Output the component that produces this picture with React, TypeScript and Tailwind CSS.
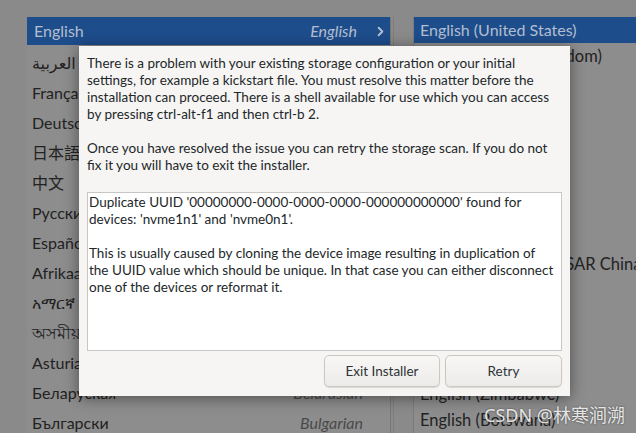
import { ChevronRight } from "lucide-react";

const languages = [
  { native: "العربية", english: "Arabic" },
  { native: "Français", english: "French" },
  { native: "Deutsch", english: "German" },
  { native: "日本語", english: "Japanese" },
  { native: "中文", english: "Mandarin Chinese" },
  { native: "Русский", english: "Russian" },
  { native: "Español", english: "Spanish" },
  { native: "Afrikaans", english: "Afrikaans" },
  { native: "አማርኛ", english: "Amharic" },
  { native: "অসমীয়া", english: "Assamese" },
  { native: "Asturianu", english: "Asturian" },
  { native: "Беларуская", english: "Belarusian" },
  { native: "Български", english: "Bulgarian" },
];

const locales = [
  "English (United Kingdom)",
  "English (India)",
  "English (Australia)",
  "English (Canada)",
  "English (Denmark)",
  "English (Ireland)",
  "English (Philippines)",
  "English (Nigeria)",
  "English (Hong Kong SAR China)",
  "English (Singapore)",
  "English (Israel)",
  "English (Malta)",
  "English (Zambia)",
  "English (Zimbabwe)",
  "English (Botswana)",
];

const App = () => {
  return (
    <div
      className="relative w-[636px] h-[433px] overflow-hidden bg-[#8a8a8a]"
      style={{ fontFamily: 'Lato, "Noto Sans", "DejaVu Sans", "Noto Sans CJK SC", sans-serif' }}
    >
      {/* Language lists (dimmed behind the dialog) */}
      <div className="flex h-full pt-[17px] pl-[27px]">
        <div className="w-[364px] shrink-0 bg-[#8d8d8d] border-r border-[#777]">
          <div className="flex items-center h-[28px] bg-[#1e4d8c] pl-[7px] pr-[2px] text-[16px] text-[#b3bfcf]">
            <span>English</span>
            <span className="ml-auto italic mr-[16px]">English</span>
            <ChevronRight className="w-[15px] h-[15px]" strokeWidth={3} />
          </div>
          <div className="pt-[3px]">
            {languages.map((lang, i) => (
              <div key={i} className="flex items-center h-[30px] pl-[5px] pr-[27px] text-[16px]">
                <span className="text-[#222]">{lang.native}</span>
                <span className="ml-auto italic text-[#4a4a4a]">{lang.english}</span>
              </div>
            ))}
          </div>
        </div>
        <div className="w-[3px] shrink-0 border-r border-[#7d7d7d]" />
        <div className="w-[19px] shrink-0" />
        <div className="flex-1 min-w-0 overflow-hidden bg-[#8d8d8d] border-l border-[#7a7a7a]">
          <div className="flex items-center h-[26px] bg-[#1e4d8c] pl-[6px] text-[16px] text-[#b3bfcf] whitespace-nowrap">
            English (United States)
          </div>
          {locales.map((loc, i) => (
            <div key={i} className="flex items-center h-[26px] pl-[6px] text-[16.5px] text-[#222] whitespace-nowrap">
              {loc}
            </div>
          ))}
        </div>
      </div>

      {/* Error dialog */}
      <div className="absolute left-[79px] top-[46px] w-[491px] h-[350px] bg-[#f6f5f4] shadow-[0_2px_14px_rgba(0,0,0,0.45)] flex flex-col pt-[9px] px-[8px] pb-[9px] text-[13.5px] leading-[17px] text-[#222729]">
        <p className="whitespace-nowrap">
          There is a problem with your existing storage configuration or your initial
          <br />
          settings, for example a kickstart file. You must resolve this matter before the
          <br />
          installation can proceed. There is a shell available for use which you can access
          <br />
          by pressing ctrl-alt-f1 and then ctrl-b 2.
        </p>
        <p className="mt-[17px] whitespace-nowrap">
          Once you have resolved the issue you can retry the storage scan. If you do not
          <br />
          fix it you will have to exit the installer.
        </p>

        <div className="mt-[18px] h-[159px] bg-white border border-[#c9c7c4] pl-[1px] pt-[1px] whitespace-nowrap">
          <p>
            Duplicate UUID '00000000-0000-0000-0000-000000000000' found for
            <br />
            devices: 'nvme1n1' and 'nvme0n1'.
          </p>
          <p className="mt-[17px]">
            This is usually caused by cloning the device image resulting in duplication of
            <br />
            the UUID value which should be unique. In that case you can either disconnect
            <br />
            one of the devices or reformat it.
          </p>
        </div>

        <div className="mt-[4px] flex justify-end gap-[5px]">
          <button className="w-[116px] h-[32px] rounded-[5px] border border-[#cdc7c2] bg-gradient-to-b from-[#f8f7f6] to-[#edebe9] shadow-[0_1px_1px_rgba(0,0,0,0.12)] text-[13.5px] text-[#2e3436]">
            Exit Installer
          </button>
          <button className="w-[117px] h-[32px] rounded-[5px] border border-[#cdc7c2] bg-gradient-to-b from-[#f8f7f6] to-[#edebe9] shadow-[0_1px_1px_rgba(0,0,0,0.12)] text-[13.5px] text-[#2e3436]">
            Retry
          </button>
        </div>
      </div>

      {/* Watermark */}
      <div
        className="absolute left-[484px] top-[402px] text-[18px] text-white/85 whitespace-nowrap [text-shadow:0_0_2px_rgba(0,0,0,0.6)]"
        style={{ fontFamily: '"Noto Sans", "Noto Sans CJK SC", sans-serif' }}
      >
        CSDN @林寒涧溯
      </div>
    </div>
  );
};

export default App;
